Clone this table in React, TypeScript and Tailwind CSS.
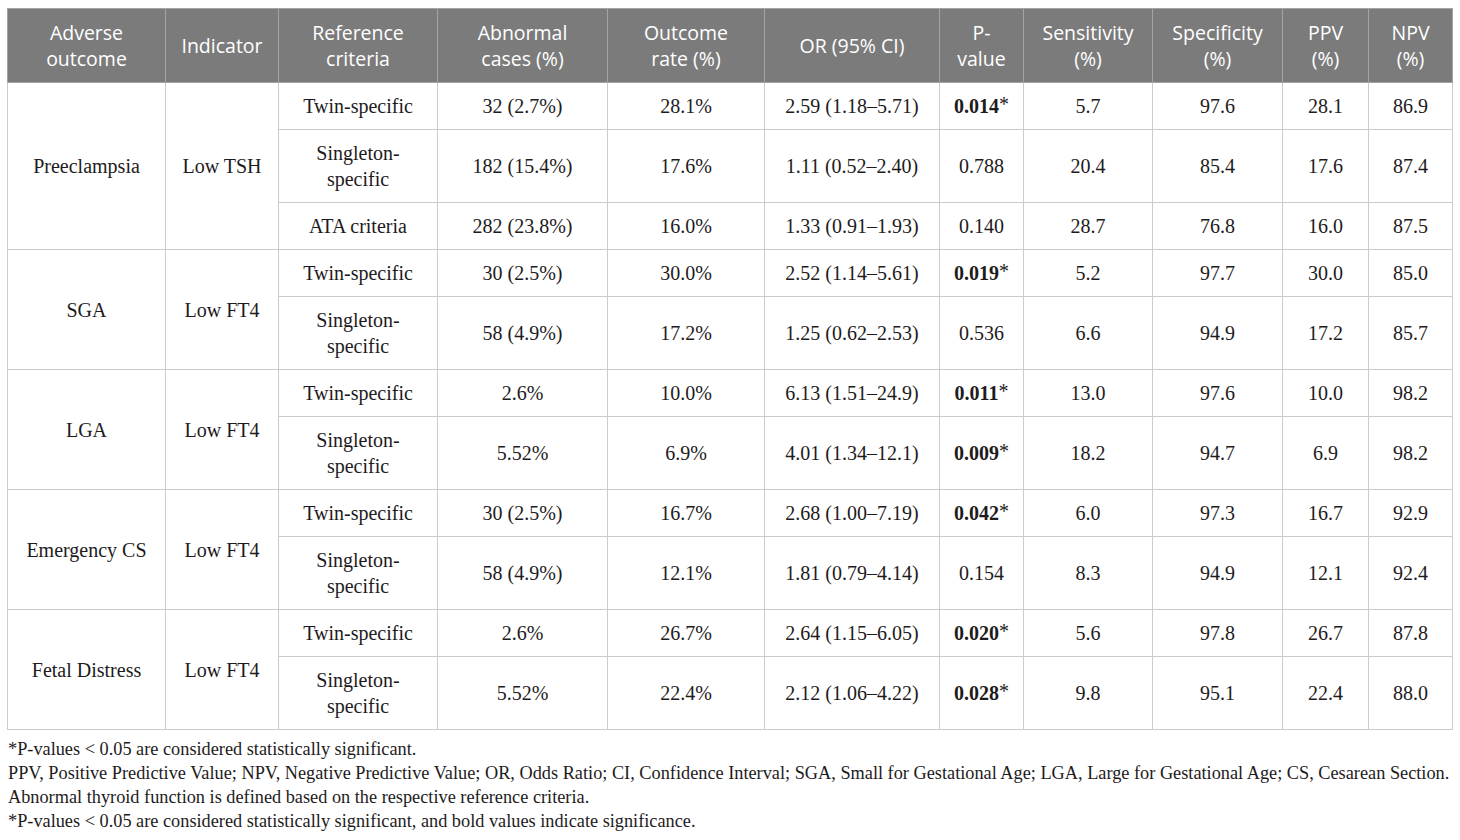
import React from "react";

type Sub = {
  criteria: string[];
  cases: string;
  rate: string;
  or: string;
  p: string;
  sig: boolean;
  sens: string;
  spec: string;
  ppv: string;
  npv: string;
};

type Group = { outcome: string; indicator: string; rows: Sub[] };

const groups: Group[] = [
  {
    outcome: "Preeclampsia",
    indicator: "Low TSH",
    rows: [
      { criteria: ["Twin-specific"], cases: "32 (2.7%)", rate: "28.1%", or: "2.59 (1.18–5.71)", p: "0.014", sig: true, sens: "5.7", spec: "97.6", ppv: "28.1", npv: "86.9" },
      { criteria: ["Singleton-", "specific"], cases: "182 (15.4%)", rate: "17.6%", or: "1.11 (0.52–2.40)", p: "0.788", sig: false, sens: "20.4", spec: "85.4", ppv: "17.6", npv: "87.4" },
      { criteria: ["ATA criteria"], cases: "282 (23.8%)", rate: "16.0%", or: "1.33 (0.91–1.93)", p: "0.140", sig: false, sens: "28.7", spec: "76.8", ppv: "16.0", npv: "87.5" },
    ],
  },
  {
    outcome: "SGA",
    indicator: "Low FT4",
    rows: [
      { criteria: ["Twin-specific"], cases: "30 (2.5%)", rate: "30.0%", or: "2.52 (1.14–5.61)", p: "0.019", sig: true, sens: "5.2", spec: "97.7", ppv: "30.0", npv: "85.0" },
      { criteria: ["Singleton-", "specific"], cases: "58 (4.9%)", rate: "17.2%", or: "1.25 (0.62–2.53)", p: "0.536", sig: false, sens: "6.6", spec: "94.9", ppv: "17.2", npv: "85.7" },
    ],
  },
  {
    outcome: "LGA",
    indicator: "Low FT4",
    rows: [
      { criteria: ["Twin-specific"], cases: "2.6%", rate: "10.0%", or: "6.13 (1.51–24.9)", p: "0.011", sig: true, sens: "13.0", spec: "97.6", ppv: "10.0", npv: "98.2" },
      { criteria: ["Singleton-", "specific"], cases: "5.52%", rate: "6.9%", or: "4.01 (1.34–12.1)", p: "0.009", sig: true, sens: "18.2", spec: "94.7", ppv: "6.9", npv: "98.2" },
    ],
  },
  {
    outcome: "Emergency CS",
    indicator: "Low FT4",
    rows: [
      { criteria: ["Twin-specific"], cases: "30 (2.5%)", rate: "16.7%", or: "2.68 (1.00–7.19)", p: "0.042", sig: true, sens: "6.0", spec: "97.3", ppv: "16.7", npv: "92.9" },
      { criteria: ["Singleton-", "specific"], cases: "58 (4.9%)", rate: "12.1%", or: "1.81 (0.79–4.14)", p: "0.154", sig: false, sens: "8.3", spec: "94.9", ppv: "12.1", npv: "92.4" },
    ],
  },
  {
    outcome: "Fetal Distress",
    indicator: "Low FT4",
    rows: [
      { criteria: ["Twin-specific"], cases: "2.6%", rate: "26.7%", or: "2.64 (1.15–6.05)", p: "0.020", sig: true, sens: "5.6", spec: "97.8", ppv: "26.7", npv: "87.8" },
      { criteria: ["Singleton-", "specific"], cases: "5.52%", rate: "22.4%", or: "2.12 (1.06–4.22)", p: "0.028", sig: true, sens: "9.8", spec: "95.1", ppv: "22.4", npv: "88.0" },
    ],
  },
];

const headers: { lines: string[]; w: string }[] = [
  { lines: ["Adverse", "outcome"], w: "w-[158px]" },
  { lines: ["Indicator"], w: "w-[113px]" },
  { lines: ["Reference", "criteria"], w: "w-[159px]" },
  { lines: ["Abnormal", "cases (%)"], w: "w-[170px]" },
  { lines: ["Outcome", "rate (%)"], w: "w-[157px]" },
  { lines: ["OR (95% CI)"], w: "w-[175px]" },
  { lines: ["P-", "value"], w: "w-[84px]" },
  { lines: ["Sensitivity", "(%)"], w: "w-[129px]" },
  { lines: ["Specificity", "(%)"], w: "w-[130px]" },
  { lines: ["PPV", "(%)"], w: "w-[86px]" },
  { lines: ["NPV", "(%)"], w: "w-[84px]" },
];

const td = "border border-[#cbcbcb] text-center align-middle px-1 leading-[26px]";

const App = () => {
  return (
    <div className="w-[1460px] h-[840px] bg-white pt-[8px] pl-[7px] text-[#1e1b1c] font-['Liberation_Serif',serif]">
      <table className="table-fixed border-collapse w-[1446px] text-[20px]">
        <thead>
          <tr className="h-[74px] bg-[#7b7b7b]">
            {headers.map((h, i) => (
              <th
                key={i}
                className={`${h.w} border border-[#a3a3a3] font-normal text-white text-[19.5px] leading-[26px] font-['Open_Sans',sans-serif] text-center align-middle px-1`}
              >
                {h.lines.map((l, j) => (
                  <div key={j}>{l}</div>
                ))}
              </th>
            ))}
          </tr>
        </thead>
        <tbody>
          {groups.map((g) =>
            g.rows.map((r, ri) => (
              <tr key={g.outcome + ri} className={r.criteria.length > 1 ? "h-[73px]" : "h-[47px]"}>
                {ri === 0 && (
                  <>
                    <td rowSpan={g.rows.length} className={td}>{g.outcome}</td>
                    <td rowSpan={g.rows.length} className={td}>{g.indicator}</td>
                  </>
                )}
                <td className={td}>
                  {r.criteria.map((c, j) => (
                    <div key={j}>{c}</div>
                  ))}
                </td>
                <td className={td}>{r.cases}</td>
                <td className={td}>{r.rate}</td>
                <td className={td}>{r.or}</td>
                <td className={td}>
                  {r.sig ? (
                    <>
                      <span className="font-bold">{r.p}</span>
                      <span className="relative top-[-2px]">*</span>
                    </>
                  ) : (
                    r.p
                  )}
                </td>
                <td className={td}>{r.sens}</td>
                <td className={td}>{r.spec}</td>
                <td className={td}>{r.ppv}</td>
                <td className={td}>{r.npv}</td>
              </tr>
            ))
          )}
        </tbody>
      </table>
      <div className="mt-[7px] text-[18.3px] leading-[24px] pl-[1px]">
        <p>*P-values &lt; 0.05 are considered statistically significant.</p>
        <p>PPV, Positive Predictive Value; NPV, Negative Predictive Value; OR, Odds Ratio; CI, Confidence Interval; SGA, Small for Gestational Age; LGA, Large for Gestational Age; CS, Cesarean Section.</p>
        <p>Abnormal thyroid function is defined based on the respective reference criteria.</p>
        <p>*P-values &lt; 0.05 are considered statistically significant, and bold values indicate significance.</p>
      </div>
    </div>
  );
};

export default App;
